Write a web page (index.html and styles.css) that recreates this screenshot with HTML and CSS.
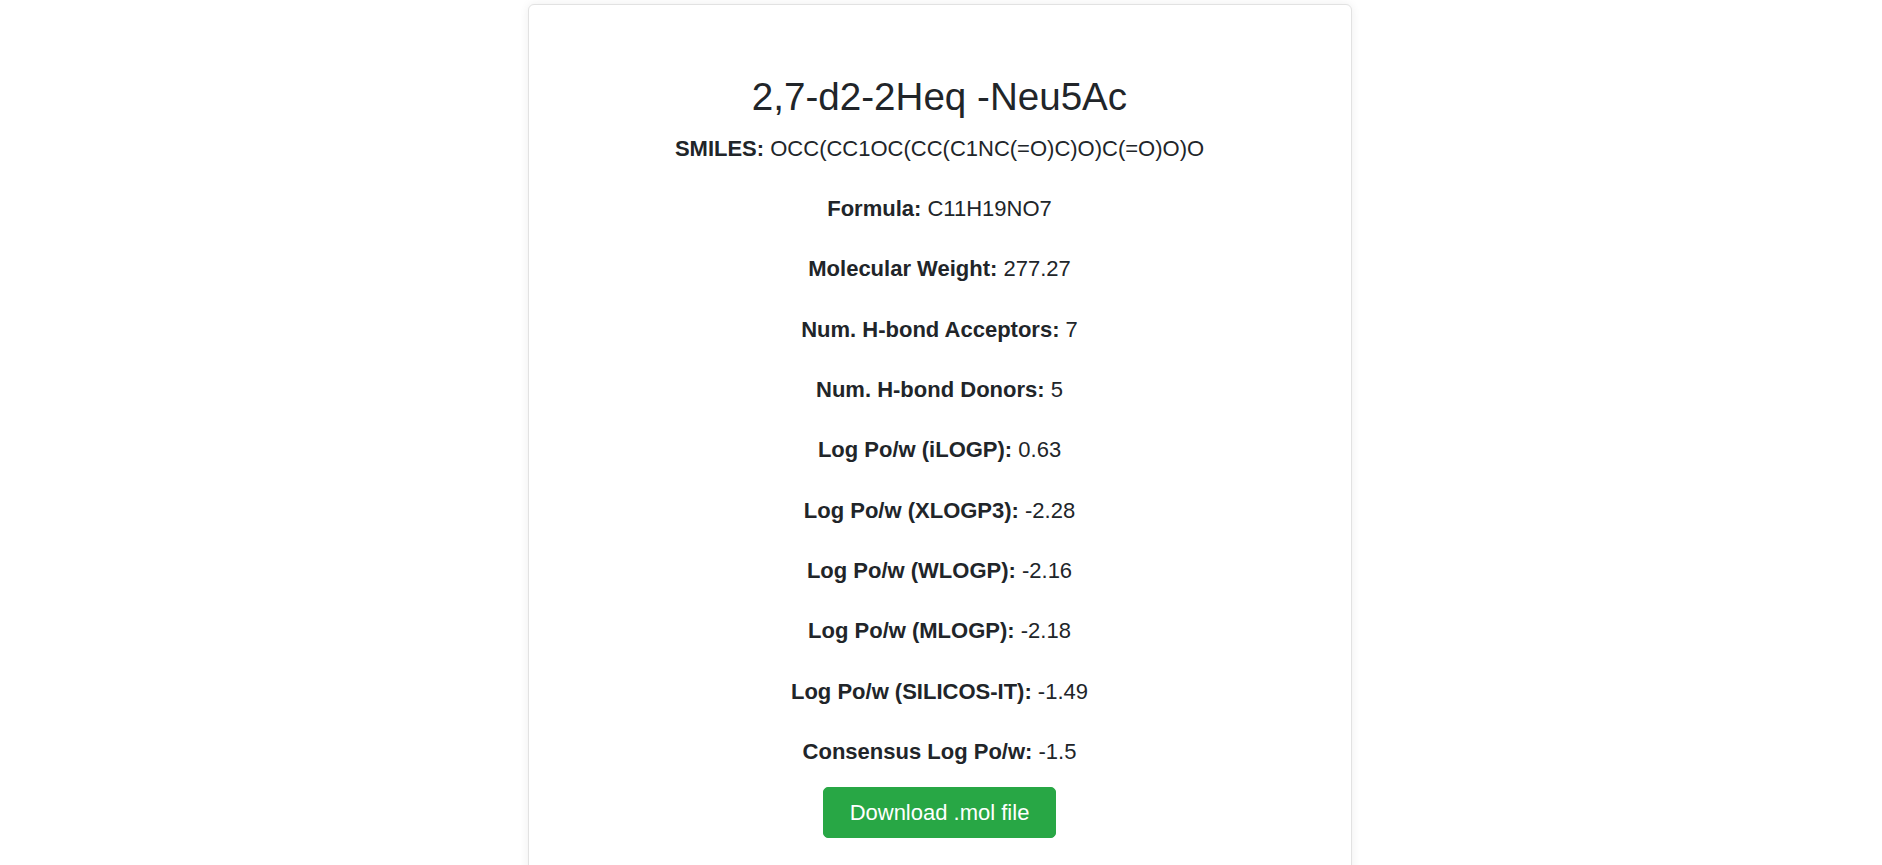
FILE: index.html
```html
<!DOCTYPE html>
<html lang="en">
<head>
<meta charset="utf-8">
<title>2,7-d2-2Heq -Neu5Ac</title>
<link rel="stylesheet" href="styles.css">
</head>
<body>
<main class="card">
  <h2 class="title">2,7-d2-2Heq -Neu5Ac</h2>
  <div class="props">
    <p class="prop"><strong>SMILES:</strong> OCC(CC1OC(CC(C1NC(=O)C)O)C(=O)O)O</p>
    <p class="prop"><strong>Formula:</strong> C11H19NO7</p>
    <p class="prop"><strong>Molecular Weight:</strong> 277.27</p>
    <p class="prop"><strong>Num. H-bond Acceptors:</strong> 7</p>
    <p class="prop"><strong>Num. H-bond Donors:</strong> 5</p>
    <p class="prop"><strong>Log Po/w (iLOGP):</strong> 0.63</p>
    <p class="prop"><strong>Log Po/w (XLOGP3):</strong> -2.28</p>
    <p class="prop"><strong>Log Po/w (WLOGP):</strong> -2.16</p>
    <p class="prop"><strong>Log Po/w (MLOGP):</strong> -2.18</p>
    <p class="prop"><strong>Log Po/w (SILICOS-IT):</strong> -1.49</p>
    <p class="prop"><strong>Consensus Log Po/w:</strong> -1.5</p>
  </div>
  <a class="btn-download" href="#">Download .mol file</a>
</main>
</body>
</html>
```

FILE: styles.css
```css
html, body {
  margin: 0;
  padding: 0;
  background: #ffffff;
}
body {
  font-family: "Liberation Sans", Arial, sans-serif;
  color: #212529;
  padding: 4px 3px 0 0;
}
.card {
  width: 822px;
  margin: 0 auto;
  border: 1px solid #e2e2e2;
  border-radius: 6px;
  box-shadow: 0 0 10px rgba(0, 0, 0, 0.07);
  padding: 69.3px 0 80px;
  display: flex;
  flex-direction: column;
  align-items: center;
  text-align: center;
  background: #fff;
}
.title {
  margin: 0;
  font-size: 38.6px;
  line-height: 46px;
  font-weight: 400;
}
.props {
  margin-top: 11.4px;
  display: flex;
  flex-direction: column;
  gap: 27.35px;
}
.prop {
  margin: 0;
  font-size: 22px;
  line-height: 33px;
}
.prop strong {
  font-weight: 700;
}
.btn-download {
  margin-top: 19.3px;
  display: inline-block;
  background: #28a745;
  border: 1px solid #28a745;
  color: #fff;
  text-decoration: none;
  font-size: 22px;
  line-height: 33px;
  padding: 8px 26px;
  border-radius: 5px;
}
```
